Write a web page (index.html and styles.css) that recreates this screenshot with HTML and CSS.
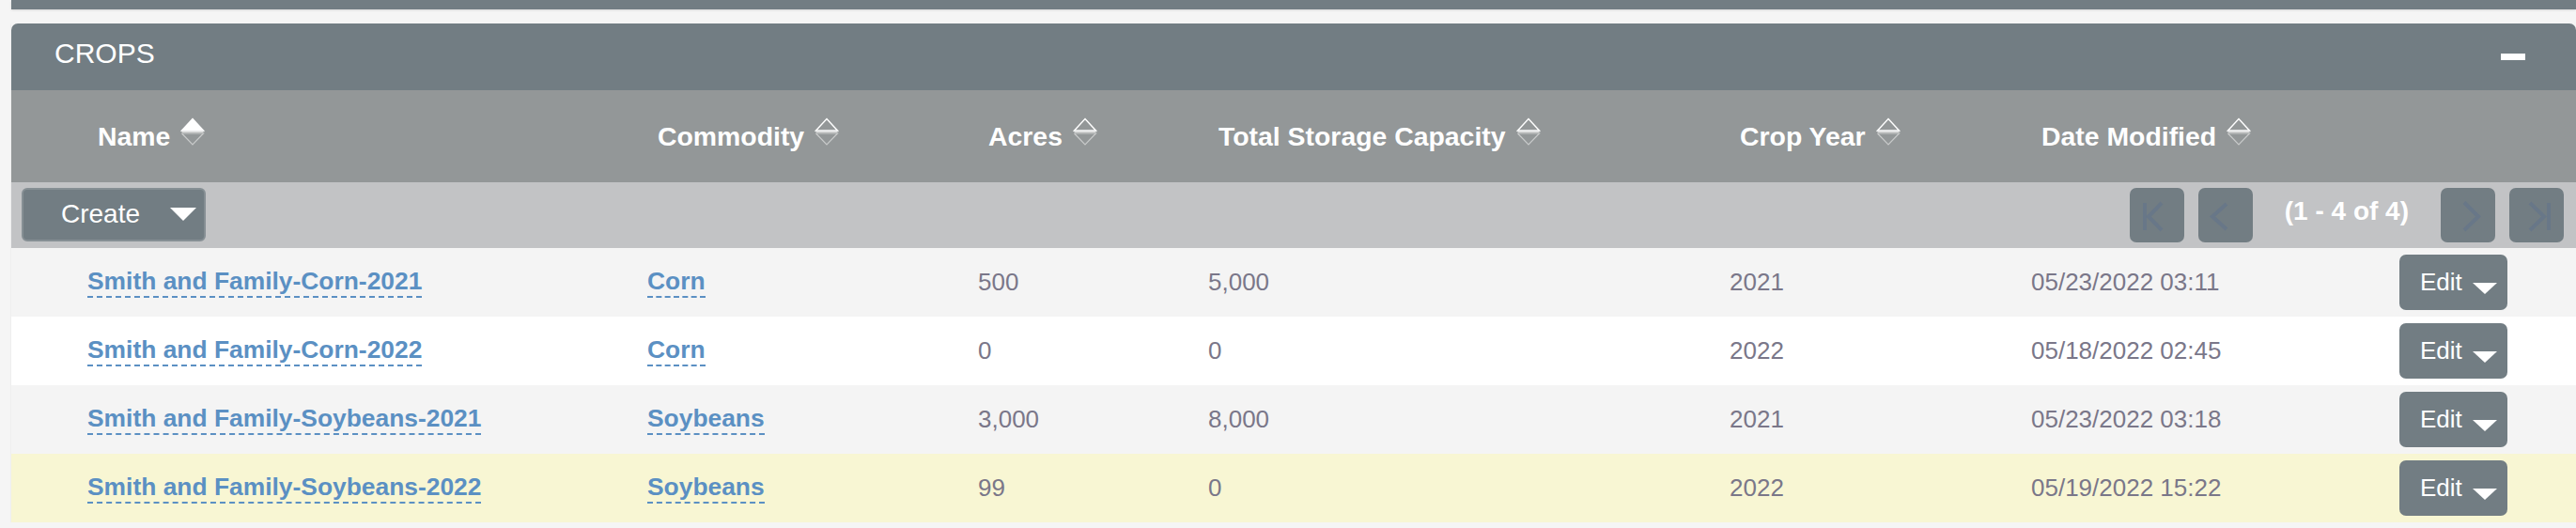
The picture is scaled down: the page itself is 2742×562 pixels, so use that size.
FILE: index.html
```html
<!DOCTYPE html>
<html lang="en">
<head>
<meta charset="utf-8">
<title>Crops</title>
<link rel="stylesheet" href="styles.css">
</head>
<body>
<div class="topbar"></div>
<section class="panel">
  <header class="panel-head">
    <h2 class="panel-title">CROPS</h2>
    <span class="collapse" aria-label="Collapse"></span>
  </header>

  <div class="grid head-row">
    <div class="hcell lead"></div>
    <div class="hcell"><span>Name</span>
      <svg class="sort" viewBox="0 0 26 30"><polygon points="13,1.5 24.5,14 1.5,14" fill="#fff" stroke="#fff" stroke-width="1.4"/><line x1="1.5" y1="15.6" x2="24.5" y2="15.6" stroke="#e8e8e8" stroke-width="1"/><polyline points="1.5,17 24.5,17 13,29 1.5,17" fill="none" stroke="#c8caca" stroke-width="1.2"/></svg>
    </div>
    <div class="hcell"><span>Commodity</span>
      <svg class="sort" viewBox="0 0 26 30"><polygon points="13,1.5 24.5,14 1.5,14" fill="none" stroke="#fff" stroke-width="1.4"/><line x1="1.5" y1="15.6" x2="24.5" y2="15.6" stroke="#e8e8e8" stroke-width="1"/><polyline points="1.5,17 24.5,17 13,29 1.5,17" fill="none" stroke="#c8caca" stroke-width="1.2"/></svg>
    </div>
    <div class="hcell"><span>Acres</span>
      <svg class="sort" viewBox="0 0 26 30"><polygon points="13,1.5 24.5,14 1.5,14" fill="none" stroke="#fff" stroke-width="1.4"/><line x1="1.5" y1="15.6" x2="24.5" y2="15.6" stroke="#e8e8e8" stroke-width="1"/><polyline points="1.5,17 24.5,17 13,29 1.5,17" fill="none" stroke="#c8caca" stroke-width="1.2"/></svg>
    </div>
    <div class="hcell"><span>Total Storage Capacity</span>
      <svg class="sort" viewBox="0 0 26 30"><polygon points="13,1.5 24.5,14 1.5,14" fill="none" stroke="#fff" stroke-width="1.4"/><line x1="1.5" y1="15.6" x2="24.5" y2="15.6" stroke="#e8e8e8" stroke-width="1"/><polyline points="1.5,17 24.5,17 13,29 1.5,17" fill="none" stroke="#c8caca" stroke-width="1.2"/></svg>
    </div>
    <div class="hcell"><span>Crop Year</span>
      <svg class="sort" viewBox="0 0 26 30"><polygon points="13,1.5 24.5,14 1.5,14" fill="none" stroke="#fff" stroke-width="1.4"/><line x1="1.5" y1="15.6" x2="24.5" y2="15.6" stroke="#e8e8e8" stroke-width="1"/><polyline points="1.5,17 24.5,17 13,29 1.5,17" fill="none" stroke="#c8caca" stroke-width="1.2"/></svg>
    </div>
    <div class="hcell"><span>Date Modified</span>
      <svg class="sort" viewBox="0 0 26 30"><polygon points="13,1.5 24.5,14 1.5,14" fill="none" stroke="#fff" stroke-width="1.4"/><line x1="1.5" y1="15.6" x2="24.5" y2="15.6" stroke="#e8e8e8" stroke-width="1"/><polyline points="1.5,17 24.5,17 13,29 1.5,17" fill="none" stroke="#c8caca" stroke-width="1.2"/></svg>
    </div>
    <div class="hcell"></div>
  </div>

  <div class="toolbar">
    <button class="create-btn" type="button"><span>Create</span><i class="caret caret-lg"></i></button>
    <nav class="pager">
      <span class="pg-btn"><svg viewBox="0 0 58 58"><line x1="16" y1="16" x2="16" y2="45" stroke="#687788" stroke-width="4"/><polyline points="34,16 20,30.5 34,45" fill="none" stroke="#687788" stroke-width="4"/></svg></span>
      <span class="pg-btn"><svg viewBox="0 0 58 58"><polyline points="30,17 15,30.5 30,44" fill="none" stroke="#687788" stroke-width="4"/></svg></span>
      <span class="pg-info">(1 - 4 of 4)</span>
      <span class="pg-btn"><svg viewBox="0 0 58 58"><polyline points="25,15.5 40,30.5 25,45" fill="none" stroke="#687788" stroke-width="4"/></svg></span>
      <span class="pg-btn"><svg viewBox="0 0 58 58"><polyline points="22,16 37,30.5 22,45" fill="none" stroke="#687788" stroke-width="4"/><line x1="42" y1="16" x2="42" y2="45" stroke="#687788" stroke-width="4"/></svg></span>
    </nav>
  </div>

  <div class="grid row row-alt">
    <div class="cell"></div>
    <div class="cell"><a class="link" href="#">Smith and Family-Corn-2021</a></div>
    <div class="cell"><a class="link" href="#">Corn</a></div>
    <div class="cell num">500</div>
    <div class="cell num">5,000</div>
    <div class="cell num">2021</div>
    <div class="cell num">05/23/2022 03:11</div>
    <div class="cell"><button class="edit-btn" type="button"><span>Edit</span><i class="caret caret-sm"></i></button></div>
  </div>
  <div class="grid row">
    <div class="cell"></div>
    <div class="cell"><a class="link" href="#">Smith and Family-Corn-2022</a></div>
    <div class="cell"><a class="link" href="#">Corn</a></div>
    <div class="cell num">0</div>
    <div class="cell num">0</div>
    <div class="cell num">2022</div>
    <div class="cell num">05/18/2022 02:45</div>
    <div class="cell"><button class="edit-btn" type="button"><span>Edit</span><i class="caret caret-sm"></i></button></div>
  </div>
  <div class="grid row row-alt">
    <div class="cell"></div>
    <div class="cell"><a class="link" href="#">Smith and Family-Soybeans-2021</a></div>
    <div class="cell"><a class="link" href="#">Soybeans</a></div>
    <div class="cell num">3,000</div>
    <div class="cell num">8,000</div>
    <div class="cell num">2021</div>
    <div class="cell num">05/23/2022 03:18</div>
    <div class="cell"><button class="edit-btn" type="button"><span>Edit</span><i class="caret caret-sm"></i></button></div>
  </div>
  <div class="grid row row-hl">
    <div class="cell"></div>
    <div class="cell"><a class="link" href="#">Smith and Family-Soybeans-2022</a></div>
    <div class="cell"><a class="link" href="#">Soybeans</a></div>
    <div class="cell num">99</div>
    <div class="cell num">0</div>
    <div class="cell num">2022</div>
    <div class="cell num">05/19/2022 15:22</div>
    <div class="cell"><button class="edit-btn" type="button"><span>Edit</span><i class="caret caret-sm"></i></button></div>
  </div>
</section>
</body>
</html>
```

FILE: styles.css
```css
* { box-sizing: border-box; }

html, body {
  margin: 0;
  padding: 0;
  background: #f5f5f5;
  font-family: "Liberation Sans", Arial, Helvetica, sans-serif;
  overflow: hidden;
}

.topbar {
  height: 10px;
  margin-left: 12px;
  background: #727d83;
  box-shadow: 0 1px 2px rgba(0,0,0,0.12);
}

.panel {
  margin: 15px 0 0 12px;
  box-shadow: 0 1px 2px rgba(0,0,0,0.08);
}

.panel-head {
  height: 71px;
  background: #727d83;
  border-radius: 7px 7px 0 0;
  display: flex;
  align-items: center;
  justify-content: space-between;
  padding: 0 54px 0 46px;
}

.panel-title {
  margin: 0 0 7px 0;
  font-size: 30px;
  font-weight: normal;
  color: #fff;
}

.collapse {
  width: 26px;
  height: 7px;
  background: #fff;
}

.grid {
  display: grid;
  grid-template-columns: 81px 596px 352px 245px 555px 321px 392px 1fr;
}

.head-row {
  height: 98px;
  background: #939798;
}

.hcell {
  display: flex;
  align-items: center;
  padding-left: 11px;
  color: #fff;
  font-size: 28.4px;
  font-weight: bold;
}

.hcell.lead { padding-left: 0; }

.sort {
  width: 26px;
  height: 30px;
  margin-left: 11px;
  margin-bottom: 10px;
  flex: none;
}

.toolbar {
  height: 70px;
  background: #c2c3c5;
  display: flex;
  justify-content: space-between;
  align-items: flex-start;
  padding: 6px 13px 0 11px;
}

.create-btn {
  width: 196px;
  height: 57px;
  display: flex;
  align-items: center;
  padding: 0 8px 2px 40px;
  background: #727d83;
  border: 2px solid #868f94;
  border-radius: 6px;
  color: #fff;
  font-family: inherit;
  font-size: 28px;
}

.caret {
  display: block;
  width: 0;
  height: 0;
  border-style: solid;
  border-color: #fff transparent transparent transparent;
}

.caret-lg {
  margin-left: auto;
  border-width: 14px 14.5px 0 14.5px;
}

.caret-sm {
  margin-left: 11px;
  margin-top: 12px;
  border-width: 12px 13.5px 0 13.5px;
}

.pager {
  display: flex;
  align-items: center;
  height: 58px;
}

.pg-btn {
  width: 58px;
  height: 58px;
  background: #727d83;
  border-radius: 7px;
  display: block;
  margin-left: 15px;
}

.pg-btn:first-child { margin-left: 0; }

.pg-btn svg {
  display: block;
  width: 58px;
  height: 58px;
}

.pg-info {
  color: #fff;
  font-size: 28px;
  font-weight: bold;
  padding: 0 34px 8px 34px;
  margin-left: 0;
}

.pg-info + .pg-btn { margin-left: 0; }

.row {
  height: 73px;
  background: #fff;
}

.row-alt { background: #f4f4f4; }
.row-hl { background: #f8f6d3; }

.cell {
  display: flex;
  align-items: center;
  font-size: 26px;
}

.num { color: #7a7789; }

.link {
  color: #5b90c3;
  font-size: 26.4px;
  font-weight: bold;
  text-decoration: none;
  border-bottom: 2px dashed #5b90c3;
  line-height: 1.15;
}

.edit-btn {
  width: 115px;
  height: 59px;
  display: flex;
  align-items: center;
  padding: 0 0 0 22px;
  background: #727d83;
  border: none;
  border-radius: 7px;
  color: #fff;
  font-family: inherit;
  font-size: 26px;
}
```
